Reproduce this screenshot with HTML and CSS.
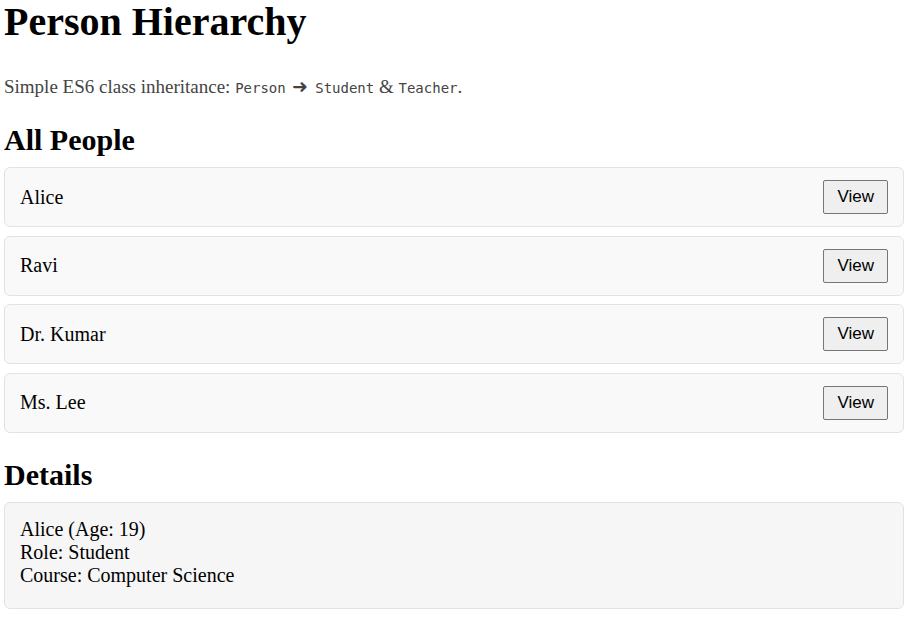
FILE: index.html
```html
<!DOCTYPE html>
<html>
<head>
<meta charset="utf-8">
<title>Person Hierarchy</title>
<link rel="stylesheet" href="styles.css">
</head>
<body>
<h1 class="title">Person Hierarchy</h1>
<p class="subtitle">Simple ES6 class inheritance: <code>Person</code> <span class="arrow">➜</span> <code>Student</code> &amp; <code>Teacher</code>.</p>
<h2 class="section">All People</h2>
<div class="list">
  <div class="card"><span class="name">Alice</span><button class="btn">View</button></div>
  <div class="card"><span class="name">Ravi</span><button class="btn">View</button></div>
  <div class="card"><span class="name">Dr. Kumar</span><button class="btn">View</button></div>
  <div class="card"><span class="name">Ms. Lee</span><button class="btn">View</button></div>
</div>
<h2 class="section">Details</h2>
<div class="details">Alice (Age: 19)<br>Role: Student<br>Course: Computer Science</div>
</body>
</html>
```
FILE: styles.css
```css
body {
  margin: 4px 10px 4px 4px;
  font-family: "Liberation Serif", "Times New Roman", serif;
  font-size: 20px;
  color: #000;
  background: #fff;
}
.title {
  font-size: 40px;
  font-weight: bold;
  margin: 0 0 36px;
  line-height: 36px;
}
.subtitle {
  font-size: 19px;
  color: #444;
  margin: 0 0 24px;
  line-height: 22px;
}
.subtitle code {
  font-family: "DejaVu Sans Mono", monospace;
  font-size: 14px;
}
.arrow {
  display: inline-block;
  margin: 0 2px;
}
.section {
  font-size: 30px;
  margin: 0 0 10px;
  line-height: 34px;
}
.list {
  display: flex;
  flex-direction: column;
  gap: 8.5px;
  margin-bottom: 25px;
}
.card {
  display: flex;
  align-items: center;
  justify-content: space-between;
  height: 58px;
  padding: 0 15px;
  background: #f9f9f9;
  border: 1px solid #e2e2e2;
  border-radius: 6px;
}
.btn {
  font-family: "Liberation Sans", Arial, sans-serif;
  font-size: 17px;
  padding: 6px 13px;
  background: #efefef;
  border: 1px solid #767676;
  border-radius: 2px;
  color: #000;
}
.details {
  background: #f6f6f6;
  border: 1px solid #e2e2e2;
  border-radius: 6px;
  padding: 15px 15px 21px;
  line-height: 23px;
}
```
